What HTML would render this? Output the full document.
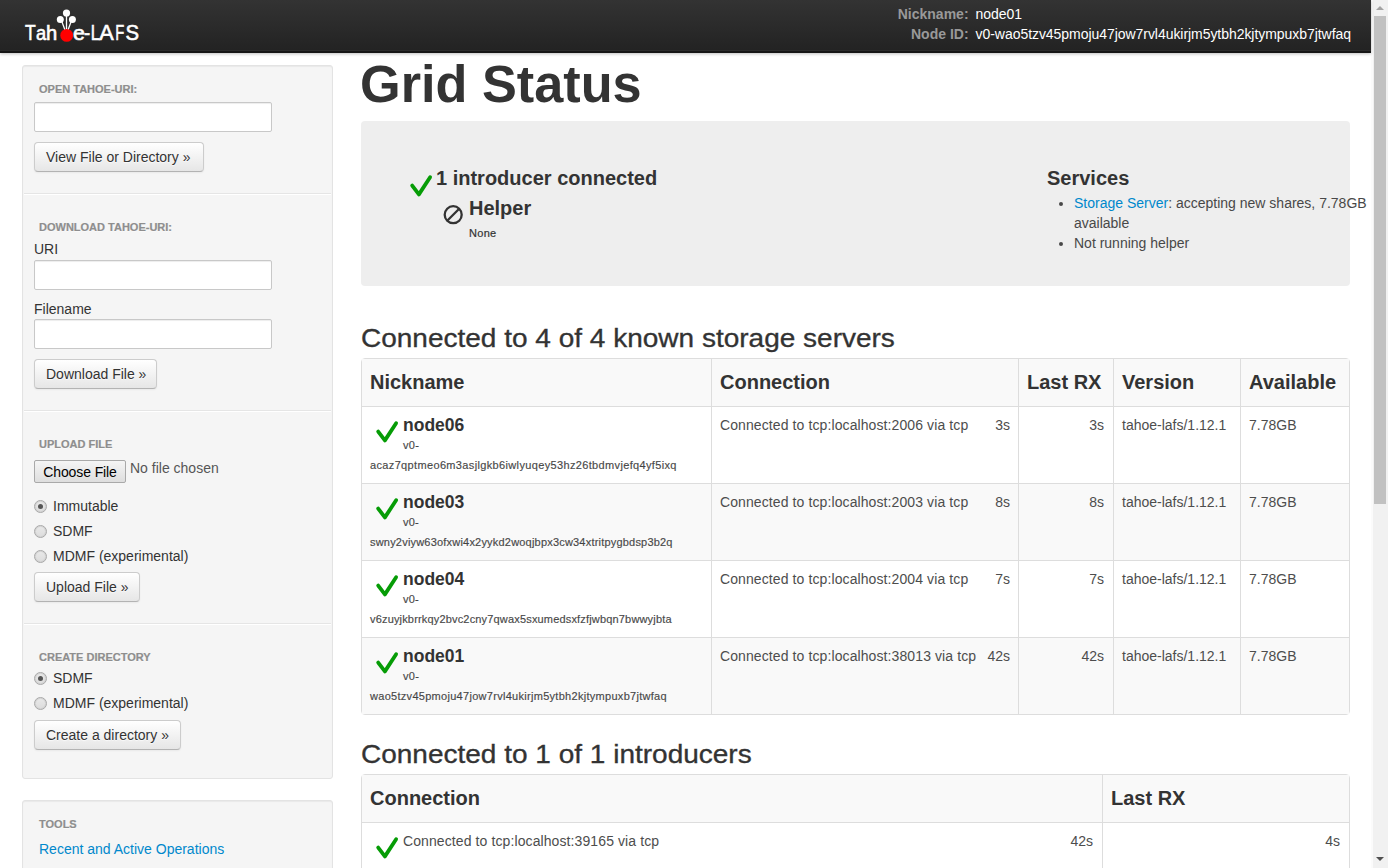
<!DOCTYPE html>
<html>
<head>
<meta charset="utf-8">
<title>Tahoe-LAFS - Welcome</title>
<style>
*{box-sizing:border-box;}
html,body{margin:0;padding:0;overflow:hidden;}
body{width:1388px;height:868px;overflow:hidden;position:relative;background:#fff;
  font-family:"Liberation Sans",sans-serif;font-size:14px;line-height:20px;color:#333;}
a{color:#0088cc;text-decoration:none;}
.abs{position:absolute;}

/* navbar */
#navbar{position:absolute;left:0;top:0;width:1371px;height:53px;
  background:linear-gradient(to bottom,#333333,#222222);
  box-shadow:0 1px 3px rgba(0,0,0,.25), inset 0 -2px 0 #161616, inset 0 -3px 0 #2b2b2b;z-index:5;}
#logo{position:absolute;left:0;top:0;}
#nodeinfo{position:absolute;right:20px;top:4px;border-collapse:collapse;}
#nodeinfo th{color:#999;font-weight:bold;text-align:right;padding:0 7px 0 0;line-height:20px;font-size:14px;}
#nodeinfo td{color:#fff;padding:0;line-height:20px;font-size:14px;letter-spacing:-0.05px;}

/* scrollbar */
#sb{position:absolute;left:1371px;top:0;width:17px;height:868px;background:#f1f1f1;border-left:2px solid #fbfbfb;}
#sbthumb{position:absolute;left:1px;top:16px;width:12px;height:488px;background:#c1c1c1;}
#sbup{position:absolute;left:3px;top:6px;width:0;height:0;border-left:4px solid transparent;border-right:4px solid transparent;border-bottom:4px solid #a3a3a3;}
#sbdown{position:absolute;left:3px;top:857px;width:0;height:0;border-left:4px solid transparent;border-right:4px solid transparent;border-top:4px solid #505050;}

/* wells */
.well{position:absolute;background:#f5f5f5;border:1px solid #e3e3e3;border-radius:3px;box-shadow:inset 0 1px 1px rgba(0,0,0,.05);}
.nh{position:absolute;left:16px;font-size:11px;font-weight:bold;color:#8e8e8e;-webkit-text-stroke:.2px #8e8e8e;text-transform:uppercase;line-height:20px;text-shadow:0 1px 0 rgba(255,255,255,.5);}
.inp{position:absolute;left:11px;width:238px;height:30px;background:#fff;border:1px solid #c8c8c8;border-radius:2px;box-shadow:inset 0 1px 1px rgba(0,0,0,.075);}
.btn{position:absolute;left:11px;height:30px;padding:0 0 0 11px;font-size:14px;line-height:28px;color:#333;text-shadow:0 1px 1px rgba(255,255,255,.75);
  background:linear-gradient(to bottom,#ffffff,#e6e6e6);border:1px solid #cccccc;border-bottom-color:#b3b3b3;border-radius:4px;
  box-shadow:inset 0 1px 0 rgba(255,255,255,.2),0 1px 2px rgba(0,0,0,.05);white-space:nowrap;}
.lbl{position:absolute;left:11px;font-size:14px;line-height:20px;color:#333;}
.div{position:absolute;left:1px;right:1px;height:2px;border-top:1px solid #e5e5e5;border-bottom:1px solid #fff;}
.radio{position:absolute;left:11px;width:13px;height:13px;border-radius:50%;border:1px solid #a8a8a8;box-shadow:inset 0 0 0 1px #d4d4d4;background:linear-gradient(to bottom,#e9e9e9,#dcdcdc);}
.radio.on::after{content:"";position:absolute;left:3px;top:3px;width:5px;height:5px;border-radius:50%;background:#555;}
.rl{position:absolute;left:30px;font-size:14px;line-height:20px;color:#333;}

/* main */
h1,h2,h3{margin:0;font-weight:bold;}
.box{position:absolute;left:361px;top:121px;width:989px;height:165px;background:#eee;border-radius:4px;}
table.t{position:absolute;left:361px;border-collapse:separate;border-spacing:0;border:1px solid #ddd;border-radius:4px;}
table.t th, table.t td{border-left:1px solid #ddd;border-top:1px solid #ddd;padding:8px;vertical-align:top;text-align:left;}
table.t tr:first-child th{border-top:0;}
table.t th:first-child, table.t td:first-child{border-left:0;}
table.t th{font-size:20px;font-weight:bold;line-height:31px;background:#f9f9f9;}
table.t tr.odd td{background:#f9f9f9;}
.chk{float:left;width:33px;height:40px;position:relative;}
.h2s{transform:scaleY(.93);transform-origin:0 26px;-webkit-text-stroke:.35px #333;}
.nick{font-size:17.5px;font-weight:bold;line-height:20px;}
.nid{font-size:11px;line-height:20px;-webkit-text-stroke:.15px #333;letter-spacing:.35px;word-wrap:break-word;}
.ck{position:absolute;left:2px;top:2px;}
.ts{float:right;}
.ct{letter-spacing:.1px;}
table.t td.r{text-align:right;}
table.t td{font-size:14px;line-height:20px;color:#4d4d4d;}
.nick{color:#333;}
</style>
</head>
<body>

<div id="navbar">
  <svg id="logo" width="150" height="53" viewBox="0 0 150 53">
    <g fill="#fff" stroke="#fff" stroke-width="0.6" font-family="Liberation Sans">
      <text x="25.01" y="39.6" font-size="22.5" textLength="10.70" lengthAdjust="spacingAndGlyphs">T</text>
      <text x="35.92" y="39.6" font-size="20" textLength="10.18" lengthAdjust="spacingAndGlyphs">a</text>
      <text x="46.10" y="39.6" font-size="20" textLength="11.21" lengthAdjust="spacingAndGlyphs">h</text>
      <text x="73.09" y="39.6" font-size="20" textLength="11.85" lengthAdjust="spacingAndGlyphs">e</text>
      <text x="84.08" y="39.6" font-size="20" textLength="6.14" lengthAdjust="spacingAndGlyphs">-</text>
      <text x="90.64" y="39.6" font-size="22.5" textLength="9.21" lengthAdjust="spacingAndGlyphs">L</text>
      <text x="99.26" y="39.6" font-size="22.5" textLength="14.48" lengthAdjust="spacingAndGlyphs">A</text>
      <text x="115.19" y="39.6" font-size="22.5" textLength="9.00" lengthAdjust="spacingAndGlyphs">F</text>
      <text x="125.38" y="39.6" font-size="22.5" textLength="13.56" lengthAdjust="spacingAndGlyphs">S</text>
    </g>
    <g stroke="#fff" stroke-width="1.3">
      <line x1="62" y1="22" x2="65" y2="30"/>
      <line x1="66.5" y1="16" x2="66.5" y2="30"/>
      <line x1="71" y1="22" x2="68" y2="30"/>
    </g>
    <circle cx="66.5" cy="13" r="3.6" fill="#fff"/>
    <circle cx="60.3" cy="19.4" r="3.5" fill="#fff"/>
    <circle cx="72.4" cy="19.4" r="3.5" fill="#fff"/>
    <circle cx="66.7" cy="35.4" r="6.4" fill="#f00"/>
  </svg>
  <table id="nodeinfo">
    <tr><th>Nickname:</th><td>node01</td></tr>
    <tr><th>Node ID:</th><td>v0-wao5tzv45pmoju47jow7rvl4ukirjm5ytbh2kjtympuxb7jtwfaq</td></tr>
  </table>
</div>

<div id="sb"><div id="sbup"></div><div id="sbthumb"></div><div id="sbdown"></div></div>

<!-- sidebar -->
<div class="well" style="left:22px;top:65px;width:311px;height:714px;">
  <div class="nh" style="top:13px;">Open Tahoe-URI:</div>
  <div class="inp" style="top:36px;"></div>
  <div class="btn" style="top:76px;width:170px;">View File or Directory &raquo;</div>
  <div class="div" style="top:127px;"></div>

  <div class="nh" style="top:151px;">Download Tahoe-URI:</div>
  <div class="lbl" style="top:173px;">URI</div>
  <div class="inp" style="top:194px;"></div>
  <div class="lbl" style="top:233px;">Filename</div>
  <div class="inp" style="top:253px;"></div>
  <div class="btn" style="top:293px;width:123px;">Download File &raquo;</div>
  <div class="div" style="top:344px;"></div>

  <div class="nh" style="top:368px;">Upload File</div>
  <div class="abs" style="left:11px;top:394px;width:92px;height:23px;border:1px solid #a9a9a9;border-radius:2px;background:linear-gradient(to bottom,#f5f5f5,#dedede);font-size:14px;line-height:22px;letter-spacing:-.1px;text-align:center;color:#000;">Choose File</div>
  <div class="abs" style="left:107px;top:392px;font-size:14px;line-height:20px;color:#555;">No file chosen</div>
  <div class="radio on" style="top:434px;"></div><div class="rl" style="top:430px;">Immutable</div>
  <div class="radio" style="top:459px;"></div><div class="rl" style="top:455px;">SDMF</div>
  <div class="radio" style="top:484px;"></div><div class="rl" style="top:480px;">MDMF (experimental)</div>
  <div class="btn" style="top:506px;width:106px;">Upload File &raquo;</div>
  <div class="div" style="top:557px;"></div>

  <div class="nh" style="top:581px;">Create Directory</div>
  <div class="radio on" style="top:606px;"></div><div class="rl" style="top:602px;">SDMF</div>
  <div class="radio" style="top:631px;"></div><div class="rl" style="top:627px;">MDMF (experimental)</div>
  <div class="btn" style="top:654px;width:147px;">Create a directory &raquo;</div>
</div>

<div class="well" style="left:22px;top:800px;width:311px;height:100px;">
  <div class="nh" style="top:13px;">Tools</div>
  <div class="abs" style="left:16px;top:38px;font-size:14px;line-height:20px;"><a>Recent and Active Operations</a></div>
</div>

<!-- main -->
<h1 class="abs" style="left:360px;top:54px;font-size:52.25px;line-height:60px;">Grid Status</h1>

<div class="box">
  <svg class="abs" style="left:45px;top:50px;" width="30" height="30" viewBox="0 0 30 30"><path d="M6.2 14.6 L12.9 23.4 L24.1 6.2" fill="none" stroke="#069c06" stroke-width="3.8" stroke-linecap="round" stroke-linejoin="round"/></svg>
  <div class="abs" style="left:75px;top:45px;font-size:20px;font-weight:bold;line-height:24px;color:#333;">1 introducer connected</div>
  <svg class="abs" style="left:81px;top:83px;" width="22" height="22" viewBox="0 0 22 22"><circle cx="11.2" cy="10.7" r="8.5" fill="none" stroke="#333" stroke-width="2.3"/><line x1="5.2" y1="16.7" x2="17.2" y2="4.7" stroke="#333" stroke-width="2.3"/></svg>
  <div class="abs" style="left:108px;top:75px;font-size:20px;font-weight:bold;line-height:24px;color:#333;">Helper</div>
  <div class="abs" style="left:108px;top:104px;font-size:11px;line-height:16px;letter-spacing:.3px;color:#333;-webkit-text-stroke:.2px #333;">None</div>

  <div class="abs" style="left:686px;top:45px;font-size:20px;font-weight:bold;line-height:24px;color:#333;">Services</div>
  <ul class="abs" style="left:686px;top:72px;width:335px;margin:0;padding:0 0 0 27px;font-size:14px;line-height:20px;color:#484848;">
    <li><a>Storage Server</a>: accepting new shares, 7.78GB available</li>
    <li>Not running helper</li>
  </ul>
</div>

<h2 class="abs h2s" style="left:361px;top:321px;font-size:28px;line-height:34px;font-weight:normal;">Connected to 4 of 4 known storage servers</h2>

<table class="t" style="top:358px;width:989px;">
  <tr><th style="width:349px;">Nickname</th><th style="width:307px;">Connection</th><th style="width:95px;">Last RX</th><th style="width:127px;">Version</th><th>Available</th></tr>
  <tr class=""><td><div class="chk"><svg class="ck" width="30" height="30" viewBox="0 0 30 30"><path d="M6.2 14.6 L12.9 23.4 L24.1 6.2" fill="none" stroke="#069c06" stroke-width="3.8" stroke-linecap="round" stroke-linejoin="round"/></svg></div><div class="nick">node06</div><div class="nid">v0-acaz7qptmeo6m3asjlgkb6iwlyuqey53hz26tbdmvjefq4yf5ixq</div></td><td><span class="ct">Connected to tcp:localhost:2006 via tcp</span><span class="ts">3s</span></td><td class="r" style="padding-right:9px">3s</td><td>tahoe-lafs/1.12.1</td><td>7.78GB</td></tr>
  <tr class="odd"><td><div class="chk"><svg class="ck" width="30" height="30" viewBox="0 0 30 30"><path d="M6.2 14.6 L12.9 23.4 L24.1 6.2" fill="none" stroke="#069c06" stroke-width="3.8" stroke-linecap="round" stroke-linejoin="round"/></svg></div><div class="nick">node03</div><div class="nid" style="letter-spacing:.2px">v0-swny2viyw63ofxwi4x2yykd2woqjbpx3cw34xtritpygbdsp3b2q</div></td><td><span class="ct">Connected to tcp:localhost:2003 via tcp</span><span class="ts">8s</span></td><td class="r" style="padding-right:9px">8s</td><td>tahoe-lafs/1.12.1</td><td>7.78GB</td></tr>
  <tr class=""><td><div class="chk"><svg class="ck" width="30" height="30" viewBox="0 0 30 30"><path d="M6.2 14.6 L12.9 23.4 L24.1 6.2" fill="none" stroke="#069c06" stroke-width="3.8" stroke-linecap="round" stroke-linejoin="round"/></svg></div><div class="nick">node04</div><div class="nid" style="letter-spacing:.17px">v0-v6zuyjkbrrkqy2bvc2cny7qwax5sxumedsxfzfjwbqn7bwwyjbta</div></td><td><span class="ct">Connected to tcp:localhost:2004 via tcp</span><span class="ts">7s</span></td><td class="r" style="padding-right:9px">7s</td><td>tahoe-lafs/1.12.1</td><td>7.78GB</td></tr>
  <tr class="odd"><td><div class="chk"><svg class="ck" width="30" height="30" viewBox="0 0 30 30"><path d="M6.2 14.6 L12.9 23.4 L24.1 6.2" fill="none" stroke="#069c06" stroke-width="3.8" stroke-linecap="round" stroke-linejoin="round"/></svg></div><div class="nick">node01</div><div class="nid" style="letter-spacing:.29px">v0-wao5tzv45pmoju47jow7rvl4ukirjm5ytbh2kjtympuxb7jtwfaq</div></td><td><span class="ct">Connected to tcp:localhost:38013 via tcp</span><span class="ts">42s</span></td><td class="r" style="padding-right:9px">42s</td><td>tahoe-lafs/1.12.1</td><td>7.78GB</td></tr>
</table>

<h2 class="abs h2s" style="left:361px;top:737px;font-size:28px;line-height:34px;font-weight:normal;">Connected to 1 of 1 introducers</h2>

<table class="t" style="top:774px;width:989px;">
  <tr><th style="width:740px;">Connection</th><th>Last RX</th></tr>
  <tr><td><div class="chk"><svg class="ck" width="30" height="30" viewBox="0 0 30 30"><path d="M6.2 14.6 L12.9 23.4 L24.1 6.2" fill="none" stroke="#069c06" stroke-width="3.8" stroke-linecap="round" stroke-linejoin="round"/></svg></div><span class="ct">Connected to tcp:localhost:39165 via tcp</span><span class="ts" style="margin-right:1px">42s</span></td><td class="r" style="padding-right:9px">4s</td></tr>
</table>

</body>
</html>
